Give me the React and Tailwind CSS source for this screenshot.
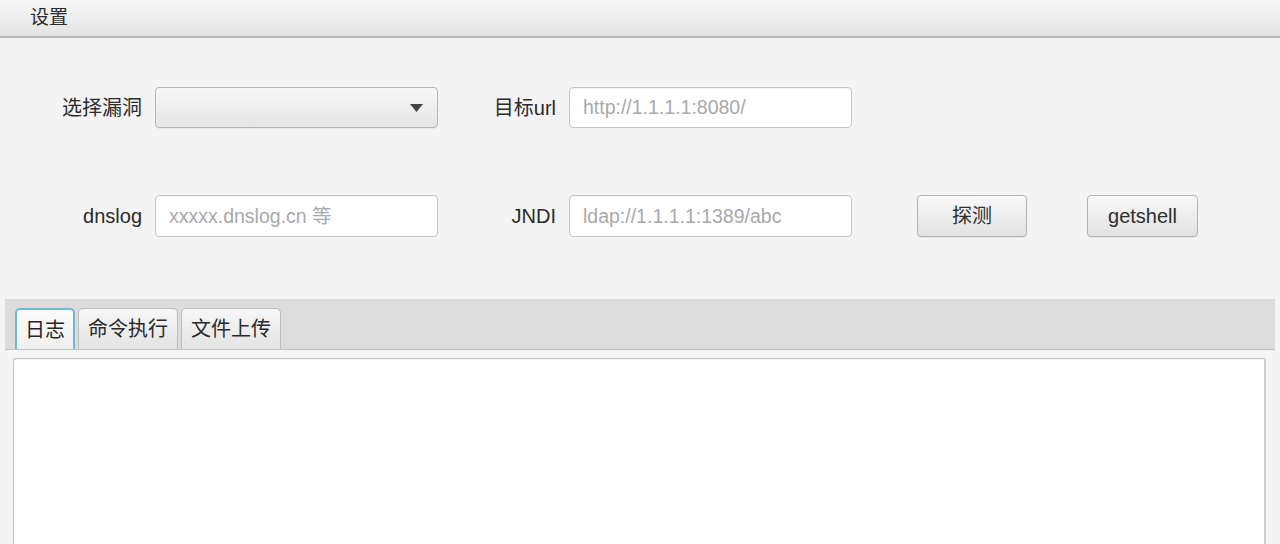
import React from 'react';

const font = { fontFamily: '"Liberation Sans", "Noto Sans CJK SC", Arial, sans-serif' };

function Field({ placeholder }) {
  return (
    <input
      className="h-full w-[283px] rounded-[4px] border border-[#c6c6c6] bg-white pl-[13px] text-[19.5px] text-[#333] outline-none placeholder:text-[#a9a9a9] shadow-[inset_0_1px_1px_rgba(0,0,0,0.04)]"
      placeholder={placeholder}
      style={font}
    />
  );
}

function Button({ children, className }) {
  return (
    <button
      className={
        'h-full rounded-[4px] border border-[#b3b3b3] bg-gradient-to-b from-[#f9f9f9] to-[#e1e1e1] text-[20px] text-[#2e2e2e] shadow-[0_1px_1px_rgba(0,0,0,0.06)] ' +
        className
      }
      style={font}
    >
      {children}
    </button>
  );
}

function Tab({ label, active }) {
  return active ? (
    <div className="flex h-[41px] items-center rounded-t-[5px] border-2 border-b-0 border-[#6cb9d3] bg-gradient-to-b from-[#fbfbfb] to-[#f0f0f0] px-[8px] text-[20px] text-[#262626]">
      {label}
    </div>
  ) : (
    <div className="flex h-[41px] items-center rounded-t-[5px] border border-b-0 border-[#bcbcbc] bg-gradient-to-b from-[#f7f7f7] to-[#e3e3e3] px-[9px] text-[20px] text-[#2a2a2a]">
      {label}
    </div>
  );
}

export default function App() {
  return (
    <div className="h-[544px] w-[1280px] overflow-hidden bg-[#f4f4f4]" style={font}>
      {/* Menu bar */}
      <div className="flex h-[38px] items-center border-b-2 border-[#b6b6b6] bg-gradient-to-b from-[#f7f7f7] to-[#e4e4e4] pl-[30px] text-[19px] text-[#2b2b2b]">
        设置
      </div>

      {/* Form */}
      <div className="mt-[49px] flex h-[41px] items-center">
        <div className="w-[142px] text-right text-[20px] text-[#2b2b2b]">选择漏洞</div>
        <div className="ml-[13px] flex h-full w-[283px] items-center justify-end rounded-[4px] border border-[#b6b6b6] bg-gradient-to-b from-[#f8f8f8] to-[#e5e5e5] pr-[14px] shadow-[0_1px_1px_rgba(0,0,0,0.05)]">
          <svg width="13" height="8" viewBox="0 0 13 8">
            <path d="M0 0 L13 0 L6.5 8 Z" fill="#444" />
          </svg>
        </div>
        <div className="w-[118px] text-right text-[20px] text-[#2b2b2b]">目标url</div>
        <div className="ml-[13px] h-full">
          <Field placeholder="http://1.1.1.1:8080/" />
        </div>
      </div>

      <div className="mt-[67px] flex h-[42px] items-center">
        <div className="w-[142px] text-right text-[20px] text-[#2b2b2b]">dnslog</div>
        <div className="ml-[13px] h-full">
          <Field placeholder="xxxxx.dnslog.cn 等" />
        </div>
        <div className="w-[118px] text-right text-[20px] text-[#2b2b2b]">JNDI</div>
        <div className="ml-[13px] h-full">
          <Field placeholder="ldap://1.1.1.1:1389/abc" />
        </div>
        <Button className="ml-[65px] w-[110px]">探测</Button>
        <Button className="ml-[60px] w-[111px]">getshell</Button>
      </div>

      {/* Tab pane */}
      <div className="mx-[5px] mt-[62px]">
        <div className="flex h-[51px] items-end gap-[3px] border-b border-[#c4c4c4] bg-[#dcdcdc] pl-[10px]">
          <Tab label="日志" active />
          <Tab label="命令执行" />
          <Tab label="文件上传" />
        </div>
        <div className="pl-[8px] pr-[9px] pt-[8px]">
          <div className="h-[200px] rounded-t-[3px] border border-b-0 border-[#c6c6c6] border-r-2 border-r-[#cfcfcf] bg-white shadow-[inset_0_1px_1px_rgba(0,0,0,0.06)]" />
        </div>
      </div>
    </div>
  );
}
